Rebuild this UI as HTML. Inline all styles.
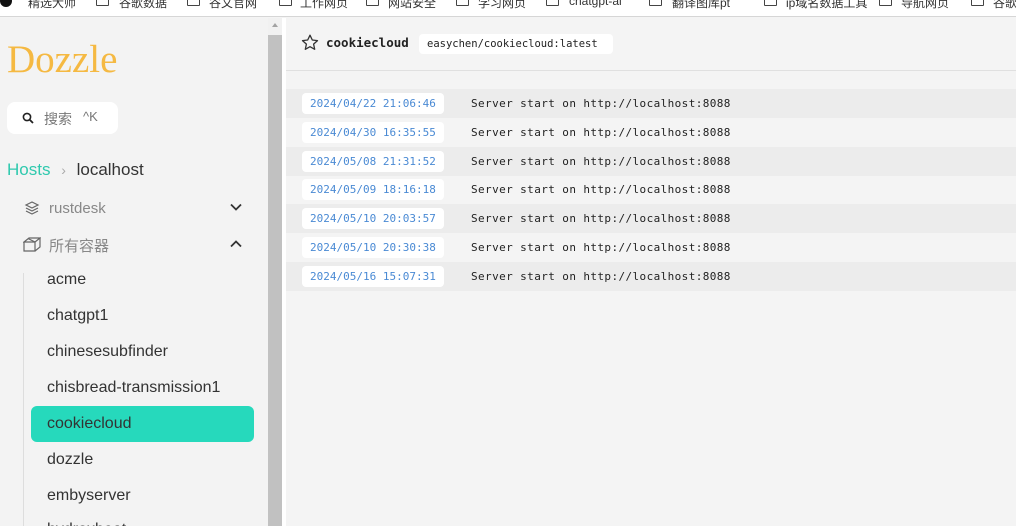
<!DOCTYPE html>
<html style="width:1016px;height:526px;overflow:hidden"><head><meta charset="utf-8"><style>
*{margin:0;padding:0;box-sizing:border-box}
body{width:1016px;height:526px;overflow:hidden;background:#f4f4f4;font-family:"Liberation Sans","Noto Sans CJK SC",sans-serif;position:relative}
#bm{position:absolute;left:0;top:0;width:1016px;height:17px;background:#fff;border-bottom:1px solid #d6d6d6;overflow:hidden}
#bm span{position:absolute;top:-6px;font-size:12px;color:#333;white-space:nowrap}
#bm i{position:absolute;top:-3px;width:13px;height:9px;border:1.5px solid #444;border-radius:1px}
#side{position:absolute;left:0;top:18px;width:268px;height:508px;background:#f3f3f3}
#sb{position:absolute;left:268px;top:18px;width:14px;height:508px;background:#f1f1f1}
#sb div{position:absolute;left:0;top:17px;width:14px;height:491px;background:#c1c1c1}
#sep{position:absolute;left:282px;top:18px;width:4px;height:508px;background:#fff}
.logo{position:absolute;left:7px;top:37px;font-family:"Liberation Serif",serif;font-size:39px;color:#f5b942}
.search{position:absolute;left:7px;top:102px;width:111px;height:32px;background:#fff;border-radius:8px;font-size:14px;color:#777}
.crumb{position:absolute;left:7px;top:160px;font-size:17px;color:#333}
.item{position:absolute;left:47px;font-size:16px;color:#333;white-space:nowrap}
.grp{position:absolute;left:49px;font-size:15px;color:#888}
.vline{position:absolute;left:23px;top:273px;width:1px;height:253px;background:#ddd}
.act{position:absolute;left:31px;top:406px;width:223px;height:36px;background:#26d9bc;border-radius:6px}
#hdr{position:absolute;left:286px;top:18px;width:730px;height:53px;border-bottom:1px solid #e0e0e0}
.row{position:absolute;left:286px;width:730px;height:29px;font-family:"DejaVu Sans Mono","Liberation Mono",monospace;font-size:11px}
.row.d{background:#ececec}
.row b{position:absolute;left:16px;top:4px;height:21px;width:142px;background:#fff;border-radius:4px;font-weight:normal;color:#4a8ad4;padding-left:8px;line-height:21px}
.row span{position:absolute;left:185px;top:0;line-height:29px;color:#222;letter-spacing:0.4px}
</style></head><body>
<div id="bm">
<i style="left:0;width:12px;height:12px;border-radius:6px;background:#111;border:none;top:-5px"></i><span style="left:28px">精选大师</span>
<i style="left:96px"></i><span style="left:119px">谷歌数据</span>
<i style="left:187px"></i><span style="left:209px">谷文官网</span>
<i style="left:279px"></i><span style="left:300px">工作网页</span>
<i style="left:366px"></i><span style="left:388px">网站安全</span>
<i style="left:456px"></i><span style="left:478px">学习网页</span>
<i style="left:546px"></i><span style="left:569px">chatgpt-ai</span>
<i style="left:649px"></i><span style="left:672px">翻译图库pt</span>
<i style="left:764px"></i><span style="left:786px">ip域名数据工具</span>
<i style="left:879px"></i><span style="left:901px">导航网页</span>
<i style="left:971px"></i><span style="left:993px">谷歌</span>
</div>
<div id="side"></div>
<div id="sb"><div></div><span style="position:absolute;left:4px;top:5px;border:3px solid transparent;border-bottom:4px solid #a3a3a3;border-top:0"></span></div>
<div id="sep"></div>
<div class="logo">Dozzle</div>
<div class="search">
<svg style="position:absolute;left:15px;top:10px" width="12" height="12" viewBox="0 0 12 12"><circle cx="5" cy="5" r="3.6" fill="none" stroke="#222" stroke-width="1.6"/><path d="M7.6 7.6L11 11" stroke="#222" stroke-width="1.8"/></svg>
<span style="position:absolute;left:37px;top:7px">搜索</span><span style="position:absolute;left:76px;top:7px;font-size:13px">^K</span></div>
<div class="crumb"><span style="color:#2fc9ae">Hosts</span> <span style="color:#aaa;font-size:14px;margin:0 6px">›</span> localhost</div>
<svg style="position:absolute;left:24px;top:200px" width="16" height="16" viewBox="0 0 16 16" fill="none" stroke="#666" stroke-width="1.2"><path d="M8 2L14 5 8 8 2 5Z"/><path d="M2 8L8 11 14 8"/><path d="M2 11L8 14 14 11"/></svg>
<div class="grp" style="top:200px">rustdesk</div>
<svg style="position:absolute;left:230px;top:203px" width="12" height="8" viewBox="0 0 12 8"><path d="M1 1.5L6 6.5 11 1.5" fill="none" stroke="#333" stroke-width="1.8"/></svg>
<svg style="position:absolute;left:23px;top:236px" width="18" height="16" viewBox="0 0 18 16" fill="none" stroke="#666" stroke-width="1.2"><path d="M1 6L6 2H17L12 6Z"/><path d="M1 6V15H12V6"/><path d="M12 15L17 11V2"/><path d="M5 2.5L12 6"/></svg>
<div class="grp" style="top:235px">所有容器</div>
<svg style="position:absolute;left:230px;top:240px" width="12" height="8" viewBox="0 0 12 8"><path d="M1 6.5L6 1.5 11 6.5" fill="none" stroke="#333" stroke-width="1.8"/></svg>
<div class="vline"></div>
<div class="act"></div>
<div class="item" style="top:271px">acme</div>
<div class="item" style="top:307px">chatgpt1</div>
<div class="item" style="top:343px">chinesesubfinder</div>
<div class="item" style="top:379px">chisbread-transmission1</div>
<div class="item" style="top:415px">cookiecloud</div>
<div class="item" style="top:451px">dozzle</div>
<div class="item" style="top:487px">embyserver</div>
<div class="item" style="top:521px;height:5px;overflow:hidden">hydroxbeat</div>
<div id="hdr">
<svg style="position:absolute;left:15px;top:16px" width="18" height="17" viewBox="0 0 18 17"><path d="M9 1.2L11.3 6 16.5 6.6 12.6 10.1 13.7 15.3 9 12.7 4.3 15.3 5.4 10.1 1.5 6.6 6.7 6Z" fill="none" stroke="#333" stroke-width="1.3" stroke-linejoin="round"/></svg>
<span style="position:absolute;left:40px;top:17px;font-family:'DejaVu Sans Mono',monospace;font-weight:bold;font-size:12.5px;color:#222">cookiecloud</span>
<span style="position:absolute;left:133px;top:16px;height:20px;width:194px;background:#fff;border-radius:4px;font-family:'DejaVu Sans Mono',monospace;font-size:10.5px;line-height:20px;padding-left:8px;color:#222">easychen/cookiecloud:latest</span>
</div>
<div class="row d" style="top:89px"><b>2024/04/22 21:06:46</b><span>Server start on http://localhost:8088</span></div>
<div class="row" style="top:118px"><b>2024/04/30 16:35:55</b><span>Server start on http://localhost:8088</span></div>
<div class="row d" style="top:147px"><b>2024/05/08 21:31:52</b><span>Server start on http://localhost:8088</span></div>
<div class="row" style="top:175px"><b>2024/05/09 18:16:18</b><span>Server start on http://localhost:8088</span></div>
<div class="row d" style="top:204px"><b>2024/05/10 20:03:57</b><span>Server start on http://localhost:8088</span></div>
<div class="row" style="top:233px"><b>2024/05/10 20:30:38</b><span>Server start on http://localhost:8088</span></div>
<div class="row d" style="top:262px"><b>2024/05/16 15:07:31</b><span>Server start on http://localhost:8088</span></div>
</body></html>
